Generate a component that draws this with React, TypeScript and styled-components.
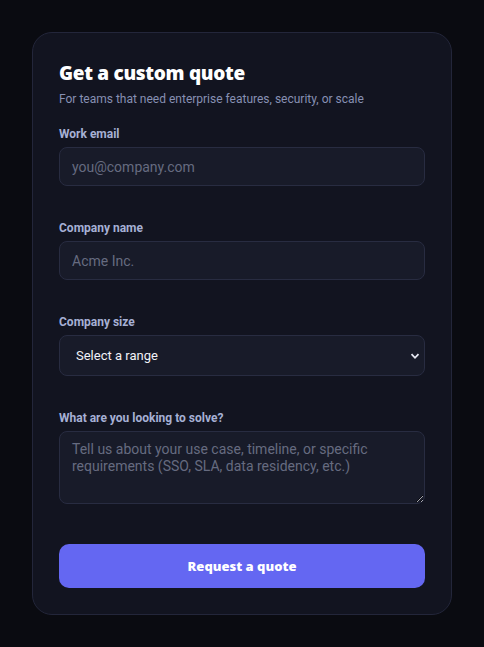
import React from "react";
import styled, { createGlobalStyle } from "styled-components";

const GlobalStyle = createGlobalStyle`
  * {
    box-sizing: border-box;
  }

  html,
  body {
    margin: 0;
    padding: 0;
    background: #0a0b11;
    font-family: Roboto, "Open Sans", sans-serif;
  }
`;

const Page = styled.main`
  min-height: 100vh;
  padding: 32px;
`;

const Card = styled.form`
  width: 420px;
  padding: 28px 26px 26px;
  border-radius: 20px;
  border: 1px solid #23263a;
  background-color: #121420;
  display: flex;
  flex-direction: column;
`;

const Title = styled.h1`
  margin: 0;
  font-family: "Open Sans", "Noto Sans", sans-serif;
  font-size: 19px;
  line-height: 24px;
  font-weight: 800;
  letter-spacing: -0.3px;
  color: #ffffff;
`;

const Subtitle = styled.p`
  margin: 5px 0 18px;
  font-size: 12px;
  line-height: 18px;
  color: #8790b3;
`;

const Field = styled.div`
  display: flex;
  flex-direction: column;
  gap: 5px;
  margin-bottom: 34px;
`;

const Label = styled.label`
  font-size: 12px;
  line-height: 16px;
  font-weight: 700;
  color: #a6b0d4;
`;

const fieldBase = `
  width: 100%;
  border: 1px solid #282c41;
  border-radius: 8px;
  background-color: #181b29;
  color: #e6e8f2;
  font-family: Roboto, "Open Sans", sans-serif;
  font-size: 14px;
  outline: 0;

  &::placeholder {
    color: #666b80;
  }
`;

const Input = styled.input`
  ${fieldBase}
  height: 39px;
  padding: 0 12px;
`;

const SelectWrap = styled.div`
  position: relative;
`;

const Select = styled.select`
  ${fieldBase}
  height: 41px;
  padding: 0 16px;
  appearance: none;
  font-size: 13px;
  color: #f1f2f8;
`;

const Chevron = styled.svg`
  position: absolute;
  right: 5px;
  top: 16px;
  width: 10px;
  height: 10px;
  pointer-events: none;
`;

const TextArea = styled.textarea`
  ${fieldBase}
  height: 73px;
  padding: 9px 12px;
  line-height: 17px;
  resize: vertical;
`;

const Button = styled.button`
  margin-top: 6px;
  height: 44px;
  border: 0;
  border-radius: 10px;
  background-color: #6467f2;
  color: #ffffff;
  font-family: "Open Sans", "Noto Sans", sans-serif;
  font-size: 13px;
  font-weight: 800;
  cursor: pointer;
`;

export default function App() {
  return (
    <Page>
      <GlobalStyle />
      <Card onSubmit={(e) => e.preventDefault()}>
        <Title>Get a custom quote</Title>
        <Subtitle>For teams that need enterprise features, security, or scale</Subtitle>

        <Field>
          <Label htmlFor="email">Work email</Label>
          <Input id="email" type="email" placeholder="you@company.com" />
        </Field>

        <Field>
          <Label htmlFor="company">Company name</Label>
          <Input id="company" placeholder="Acme Inc." />
        </Field>

        <Field>
          <Label htmlFor="size">Company size</Label>
          <SelectWrap>
            <Select id="size" defaultValue="">
              <option value="">Select a range</option>
              <option value="1-50">1–50</option>
              <option value="51-200">51–200</option>
              <option value="201-1000">201–1000</option>
              <option value="1000+">1000+</option>
            </Select>
            <Chevron viewBox="0 0 10 10">
              <path d="M1.5 3.2 L5 6.8 L8.5 3.2" fill="none" stroke="#e6e8f2" strokeWidth="1.8" />
            </Chevron>
          </SelectWrap>
        </Field>

        <Field>
          <Label htmlFor="needs">What are you looking to solve?</Label>
          <TextArea
            id="needs"
            placeholder="Tell us about your use case, timeline, or specific requirements (SSO, SLA, data residency, etc.)"
          />
        </Field>

        <Button type="submit">Request a quote</Button>
      </Card>
    </Page>
  );
}
